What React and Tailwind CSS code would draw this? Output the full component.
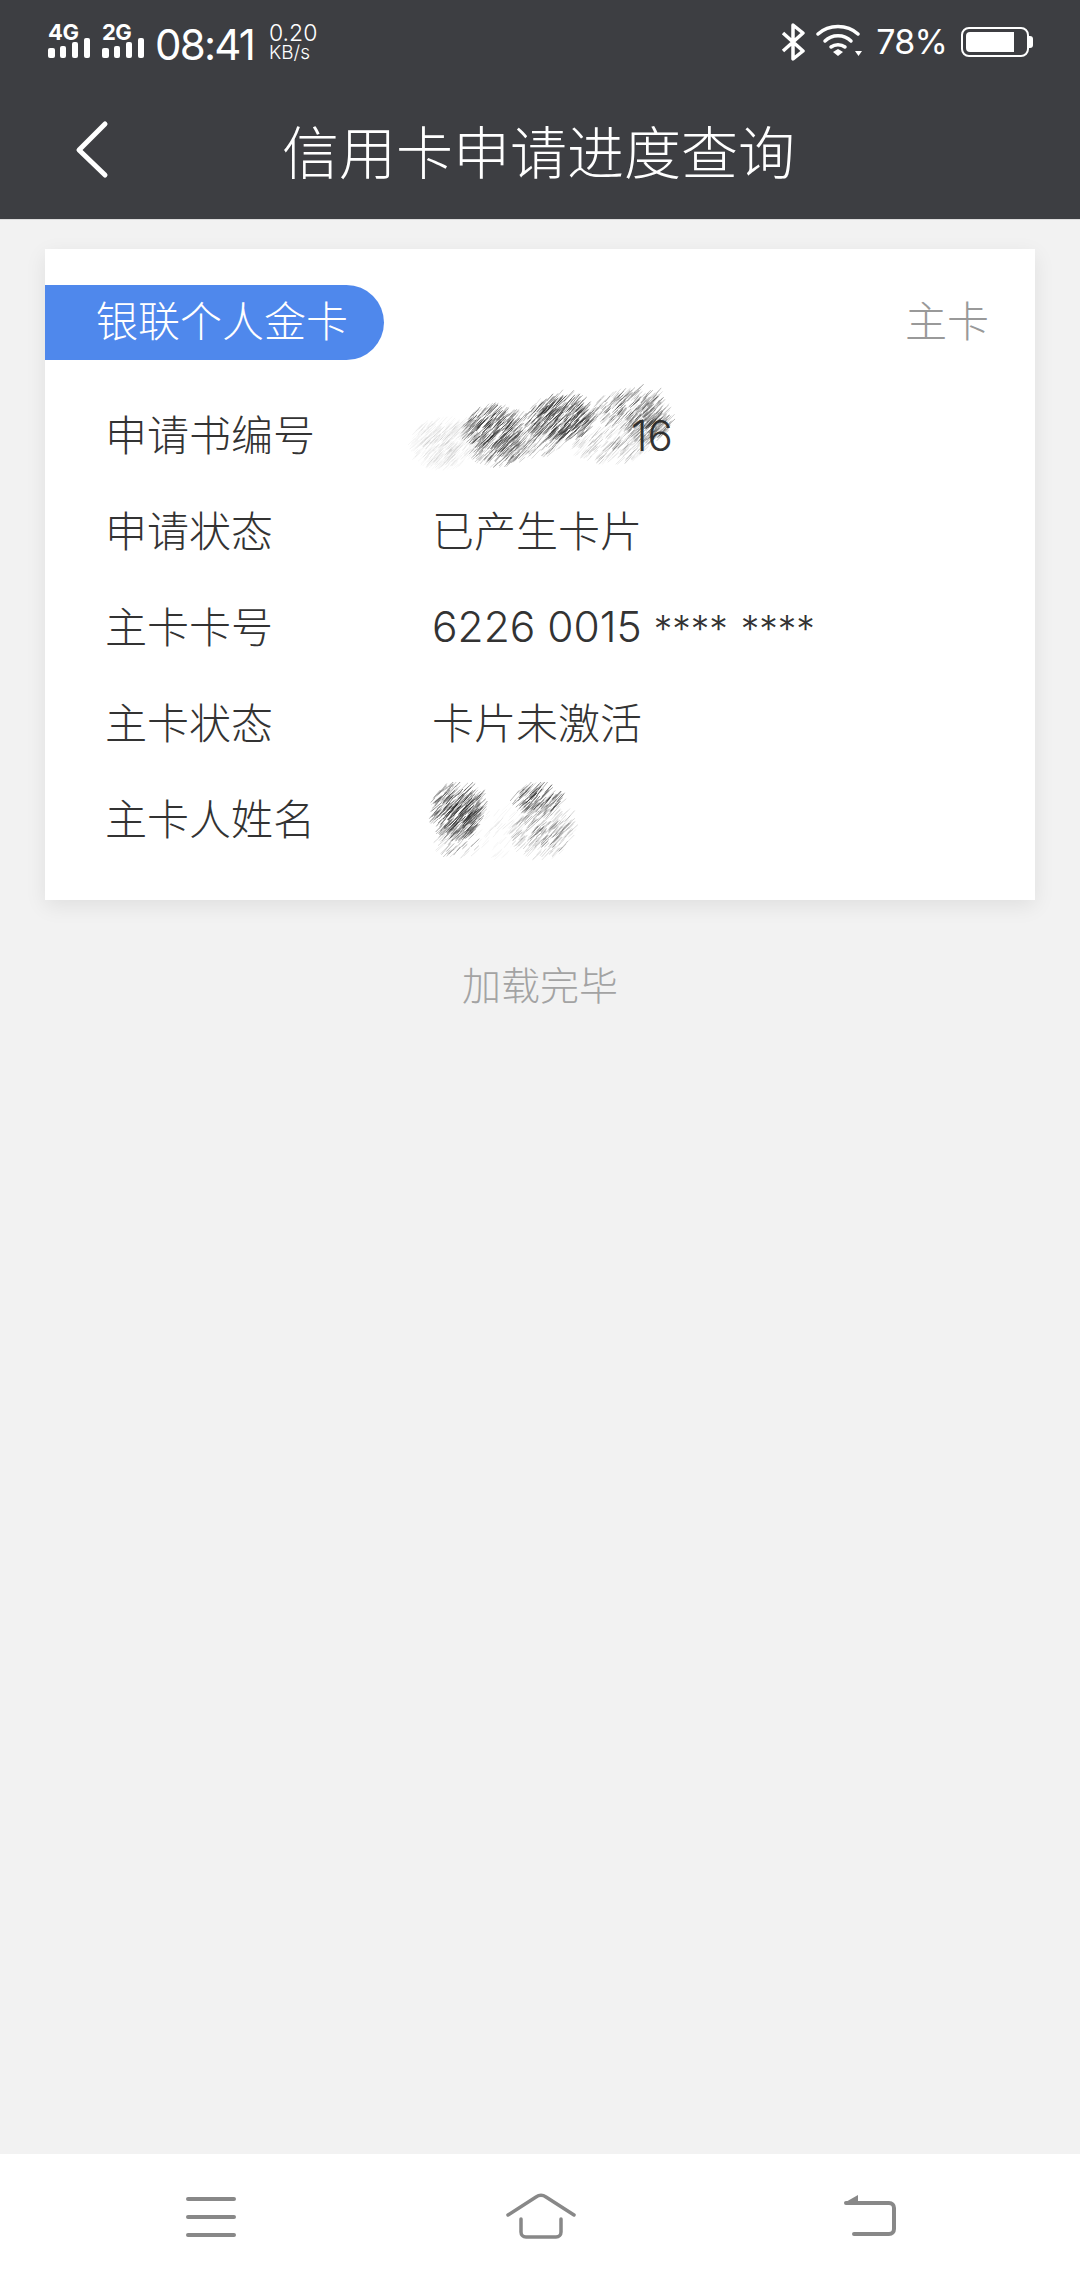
import React from "react";

// seeded random so the scribbles stay the same on every render
function makeRandom(seed) {
  let s = seed;
  return () => {
    s = (s * 16807) % 2147483647;
    return (s - 1) / 2147483646;
  };
}

function hatch(blobs, seed) {
  const rand = makeRandom(seed);
  const lines = [];
  blobs.forEach((b) => {
    for (let i = 0; i < b.n; i++) {
      const a = rand() * Math.PI * 2;
      const r = Math.sqrt(rand());
      const x = b.x + Math.cos(a) * r * b.rx;
      const y = b.y + Math.sin(a) * r * b.ry;
      const len = 5 + rand() * 10;
      const angle = -0.9 + rand() * 0.2;
      lines.push({
        x1: x,
        y1: y,
        x2: x + Math.cos(angle) * len,
        y2: y + Math.sin(angle) * len,
        o: b.o * (0.25 + rand() * 0.75) * (1.15 - r * 0.6),
      });
    }
  });
  return lines;
}

// coordinates are relative to each svg
const serialBlobs = [
  { x: 36, y: 63, rx: 34, ry: 24, n: 360, o: 0.1 },
  { x: 85, y: 48, rx: 30, ry: 22, n: 300, o: 0.8 },
  { x: 94, y: 70, rx: 30, ry: 14, n: 150, o: 0.6 },
  { x: 125, y: 60, rx: 30, ry: 16, n: 110, o: 0.4 },
  { x: 152, y: 38, rx: 34, ry: 22, n: 380, o: 0.9 },
  { x: 205, y: 65, rx: 40, ry: 16, n: 200, o: 0.25 },
  { x: 223, y: 28, rx: 36, ry: 20, n: 220, o: 0.55 },
  { x: 240, y: 43, rx: 22, ry: 18, n: 170, o: 0.6 },
];

const nameBlobs = [
  { x: 29, y: 32, rx: 26, ry: 28, n: 360, o: 0.9 },
  { x: 30, y: 64, rx: 22, ry: 16, n: 50, o: 0.45 },
  { x: 72, y: 52, rx: 24, ry: 28, n: 50, o: 0.1 },
  { x: 109, y: 20, rx: 24, ry: 14, n: 120, o: 0.85 },
  { x: 114, y: 52, rx: 30, ry: 28, n: 240, o: 0.4 },
];

function Scribble({ blobs, seed, className }) {
  const lines = hatch(blobs, seed);
  return (
    <svg className={className} fill="none" stroke="#2a2a2a" strokeWidth="1">
      {lines.map((l, i) => (
        <line key={i} x1={l.x1} y1={l.y1} x2={l.x2} y2={l.y2} strokeOpacity={l.o} />
      ))}
    </svg>
  );
}

function SignalBars({ label }) {
  return (
    <div className="relative w-[42px] h-[36px]">
      <span className="absolute left-0 top-[-3px] text-[22px] leading-[24px] font-bold tracking-[-0.5px] text-white">
        {label}
      </span>
      <svg className="absolute left-0 top-0" width="42" height="36" fill="#fff">
        <rect x="0" y="25" width="7" height="10" rx="2" />
        <rect x="12" y="23" width="6" height="12" rx="2" />
        <rect x="24" y="19" width="6" height="16" rx="2" />
        <rect x="36" y="15" width="6" height="20" rx="2" />
      </svg>
    </div>
  );
}

function StatusBar() {
  return (
    <div className="flex items-start justify-between pl-[48px] pr-[47px] pt-[23px] h-[85px]">
      <div className="flex items-start">
        <SignalBars label="4G" />
        <div className="ml-[12px]">
          <SignalBars label="2G" />
        </div>
        <span className="ml-[11px] mt-[-2px] text-[42px] leading-[48px] font-normal tracking-[-1.8px] text-white">
          08:41
        </span>
        <div className="ml-[15px] mt-[-1px] flex flex-col text-white font-light">
          <span className="text-[23px] leading-[22px]">0.20</span>
          <span className="text-[19px] leading-[18px]">KB/s</span>
        </div>
      </div>
      <div className="flex items-start">
        <svg width="24" height="38" viewBox="0 0 24 38" fill="none" stroke="#fff" strokeWidth="3.5" strokeLinejoin="round">
          <path d="M2 10l20 18-10 8V2l10 8L2 28" />
        </svg>
        <svg className="ml-[11px]" width="46" height="36" viewBox="0 0 46 36" fill="none" stroke="#fff" strokeWidth="3.5" strokeLinecap="round">
          <path d="M2 11c11-10 29-10 40 0" />
          <path d="M9 18c7-7 19-7 26 0" />
          <path d="M15 24c4-3 10-3 14 0" />
          <path d="M17 29l5-3 5 3-5 4z" fill="#fff" stroke="none" />
          <path d="M39 28h7l-3.500 5z" fill="#fff" stroke="none" />
        </svg>
        <span className="ml-[14px] text-[34px] leading-[38px] font-normal tracking-[-0.8px] text-white">78%</span>
        <div className="ml-[14px] mt-[4px] flex items-center">
          <div className="w-[68px] h-[30px] rounded-[8px] border-2 border-white p-[3px]">
            <div className="h-full w-[48px] rounded-l-[4px] bg-white" />
          </div>
          <div className="w-[4px] h-[12px] rounded-r-[3px] bg-white" />
        </div>
      </div>
    </div>
  );
}

function InfoRow({ label, children }) {
  return (
    <div className="relative flex items-center h-[96px] pl-[60px] pb-[2px]">
      <span className="w-[327px] text-[42px] font-light text-[#333]">{label}</span>
      <span className="text-[42px] font-light text-[#333]">{children}</span>
    </div>
  );
}

export default function App() {
  return (
    <div className="flex flex-col min-h-[2280px] bg-[#f2f2f2] font-['Inter','Noto_Sans_CJK_SC',sans-serif]">
      {/* Header */}
      <div className="h-[220px] bg-[#3d3e42] border-b border-[#dcdcdc]">
        <StatusBar />
        <div className="relative flex items-center justify-center h-[100px] mt-[18px]">
          <svg className="absolute left-[73px] top-[17px]" width="38" height="62" viewBox="0 0 38 62" fill="none" stroke="#fff" strokeWidth="5" strokeLinecap="round" strokeLinejoin="round">
            <path d="M32 4L6 30l26 25" />
          </svg>
          <span className="mt-[2px] mr-[3px] text-[57px] leading-[70px] font-light text-white">信用卡申请进度查询</span>
        </div>
      </div>

      {/* Main Content */}
      <div className="flex-1 px-[45px] pt-[29px]">
        <div className="bg-white pt-[36px] pb-[32px] shadow-[0_6px_20px_rgba(0,0,0,0.08)]">
          <div className="flex items-center justify-between h-[75px] pr-[46px]">
            <div className="flex items-center h-full w-[339px] pl-[51px] pb-[2px] rounded-r-[38px] bg-[#4f88ec] whitespace-nowrap text-[42px] font-light text-white">
              银联个人金卡
            </div>
            <span className="mb-[2px] text-[42px] font-light text-[#999]">主卡</span>
          </div>

          <div className="mt-[28px]">
            <InfoRow label="申请书编号">
              <span className="pl-[199px]">16</span>
              <Scribble
                blobs={serialBlobs}
                seed={1234}
                className="absolute left-[360px] top-[-4px] w-[290px] h-[100px]"
              />
            </InfoRow>
            <InfoRow label="申请状态">已产生卡片</InfoRow>
            <InfoRow label="主卡卡号">
              <span className="text-[42.500px]">6226 0015</span>
              <span className="ml-[12px] text-[37px]">****</span>
              <span className="ml-[13px] text-[37px]">****</span>
            </InfoRow>
            <InfoRow label="主卡状态">卡片未激活</InfoRow>
            <InfoRow label="主卡人姓名">
              <Scribble
                blobs={nameBlobs}
                seed={4321}
                className="absolute left-[380px] top-[10px] w-[160px] h-[90px]"
              />
            </InfoRow>
          </div>
        </div>

        <p className="mt-[56px] text-center text-[39px] leading-[60px] font-light text-[#a3a3a3]">加载完毕</p>
      </div>

      {/* Bottom nav */}
      <div className="flex items-start h-[126px] pt-[39px] pl-[186px] bg-white">
        <svg width="50" height="46" viewBox="0 0 50 46" fill="none" stroke="#888" strokeWidth="4" strokeLinecap="round">
          <path d="M2 6h46M2 24h46M2 42h46" />
        </svg>
        <svg width="70" height="46" viewBox="0 0 70 46" fill="none" stroke="#888" strokeWidth="3.500" strokeLinecap="round" strokeLinejoin="round" className="ml-[270px]">
          <path d="M2 22L30 4c3-2 7-2 10 0l28 18" />
          <path d="M15 26v13c0 3 2 5 5 5h30c3 0 5-2 5-5V26" />
        </svg>
        <svg width="54" height="46" viewBox="0 0 54 46" fill="none" stroke="#888" strokeWidth="4" strokeLinecap="round" strokeLinejoin="round" className="ml-[267px]">
          <path d="M3 10h43c3 0 5 2 5 5v21c0 3-2 5-5 5H11" />
          <path d="M1 10l14-8v8z" fill="#888" stroke="none" />
        </svg>
      </div>
    </div>
  );
}
